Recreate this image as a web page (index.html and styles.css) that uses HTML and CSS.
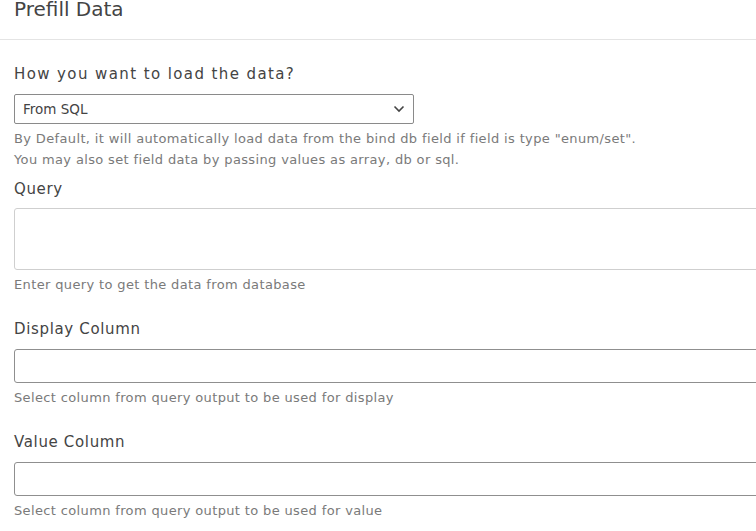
FILE: index.html
```html
<!DOCTYPE html>
<html>
<head lang="en">
    <meta charset="UTF-8">
    <title>Prefill Data</title>
    <link rel="stylesheet" href="styles.css">
</head>
<body>
    <div class="panel">
        <header class="panel-head">Prefill Data</header>
        <section class="panel-body">
            <div class="group group-first">
                <label class="label label-main">How you want to load the data?</label>
                <div class="select">
                    <span>From SQL</span>
                    <svg width="12" height="8" viewBox="0 0 12 8"><path d="M1.5 1.5 6 6l4.5-4.5" fill="none" stroke="#444" stroke-width="1.6"/></svg>
                </div>
                <p class="help">By Default, it will automatically load data from the bind db field if field is type "enum/set".<br>You may also set field data by passing values as array, db or sql.</p>
            </div>
            <div class="group">
                <label class="label">Query</label>
                <textarea class="field area"></textarea>
                <p class="help">Enter query to get the data from database</p>
            </div>
            <div class="group">
                <label class="label">Display Column</label>
                <input class="field input" type="text">
                <p class="help">Select column from query output to be used for display</p>
            </div>
            <div class="group">
                <label class="label">Value Column</label>
                <input class="field input" type="text">
                <p class="help">Select column from query output to be used for value</p>
            </div>
        </section>
    </div>
</body>
</html>
```

FILE: styles.css
```css
* {
    margin: 0;
    padding: 0;
    box-sizing: border-box;
}
html,body{
    height:100%;
    overflow:hidden;
    background:#fff;
}
body{
    font-family: "DejaVu Sans", "Open Sans", sans-serif;
    color:#333;
}
.panel-head{
    height:40px;
    padding:0 14px;
    font-size:20px;
    line-height:18px;
    color:#444;
    border-bottom:1px solid #e4e4e4;
}
.panel-body{
    padding:24px 0 0 14px;
}
.group{
    margin-bottom:24px;
}
.group-first{
    margin-bottom:9px;
}
.label{
    display:block;
    font-size:15px;
    line-height:20px;
    letter-spacing:0.65px;
    color:#444;
    margin-bottom:10px;
}
.label-main{
    letter-spacing:1.4px;
}
.select{
    width:400px;
    height:30px;
    border:1px solid #8a8a8a;
    border-radius:2px;
    display:flex;
    align-items:center;
    justify-content:space-between;
    padding:0 8px 0 8px;
    font-size:13.5px;
    color:#444;
}
.field{
    display:block;
    width:calc(100% + 20px);
    border-radius:3px;
    background:#fff;
    font:inherit;
}
.area{
    height:62px;
    margin-top:-1px;
    border:1px solid #cfcfcf;
    resize:none;
}
.input{
    height:34px;
    border:1px solid #8f8f8f;
}
.help{
    margin-top:4px;
    font-size:13px;
    line-height:21px;
    letter-spacing:0.36px;
    color:#7a7a7a;
}
```
